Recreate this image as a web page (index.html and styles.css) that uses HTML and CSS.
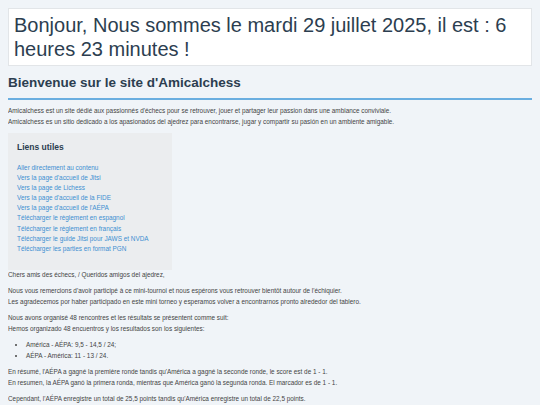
FILE: index.html
```html
<!DOCTYPE html>
<html lang="fr">
<head>
<meta charset="utf-8">
<title>Amicalchess</title>
<link rel="stylesheet" href="styles.css">
</head>
<body>
<div class="greeting">Bonjour, Nous sommes le mardi 29 juillet 2025, il est : 6 heures 23 minutes !</div>
<h2 class="title">Bienvenue sur le site d'Amicalchess</h2>
<p class="txt">Amicalchess est un site dédié aux passionnés d'échecs pour se retrouver, jouer et partager leur passion dans une ambiance conviviale.<br>Amicalchess es un sitio dedicado a los apasionados del ajedrez para encontrarse, jugar y compartir su pasión en un ambiente amigable.</p>
<nav class="links">
  <h3 class="links-title">Liens utiles</h3>
  <ul class="links-list">
    <li><a href="#">Aller directement au contenu</a></li>
    <li><a href="#">Vers la page d'accueil de Jitsi</a></li>
    <li><a href="#">Vers la page de Lichess</a></li>
    <li><a href="#">Vers la page d'accueil de la FIDE</a></li>
    <li><a href="#">Vers la page d'accueil de l'AÉPA</a></li>
    <li><a href="#">Télécharger le règlement en espagnol</a></li>
    <li><a href="#">Télécharger le règlement en français</a></li>
    <li><a href="#">Télécharger le guide Jitsi pour JAWS et NVDA</a></li>
    <li><a href="#">Télécharger les parties en format PGN</a></li>
  </ul>
</nav>
<p class="txt first">Chers amis des échecs, / Queridos amigos del ajedrez,</p>
<p class="txt">Nous vous remercions d'avoir participé à ce mini-tournoi et nous espérons vous retrouver bientôt autour de l'échiquier.<br>Les agradecemos por haber participado en este mini torneo y esperamos volver a encontrarnos pronto alrededor del tablero.</p>
<p class="txt">Nous avons organisé 48 rencontres et les résultats se présentent comme suit:<br>Hemos organizado 48 encuentros y los resultados son los siguientes:</p>
<ul class="txt results">
  <li>América - AÉPA: 9,5 - 14,5 / 24;</li>
  <li>AÉPA - América: 11 - 13 / 24.</li>
</ul>
<p class="txt">En résumé, l'AÉPA a gagné la première ronde tandis qu'América a gagné la seconde ronde, le score est de 1 - 1.<br>En resumen, la AÉPA ganó la primera ronda, mientras que América ganó la segunda ronda. El marcador es de 1 - 1.</p>
<p class="txt">Cependant, l'AÉPA enregistre un total de 25,5 points tandis qu'América enregistre un total de 22,5 points.<br>Sin embargo, la AÉPA registra un total de 25,5 puntos, mientras que América registra un total de 22,5 puntos.</p>
</body>
</html>
```

FILE: styles.css
```css
html, body {
  background: #f0f4f8;
}
body {
  margin: 8px;
  font-family: "Liberation Sans", Arial, sans-serif;
  color: #444;
}
.greeting {
  background: #fff;
  border: 1px solid #e2e5e8;
  padding: 4px 5px;
  font-size: 20px;
  line-height: 24px;
  color: #2c3e50;
}
.title {
  margin: 8px 0 0;
  padding-bottom: 6px;
  border-bottom: 2px solid #6aaee0;
  font-size: 13.5px;
  line-height: 18px;
  color: #2c3e50;
}
.txt {
  font-size: 6.4px;
  line-height: 10.5px;
  margin: 6px 0;
}
.links {
  background: #ebedef;
  width: 146px;
  padding: 8px 9px 16px;
  margin-top: 4px;
}
.links-title {
  margin: 0 0 10px;
  font-size: 8.5px;
  line-height: 12px;
  color: #2c3e50;
}
.links-list {
  list-style: none;
  margin: 0;
  padding: 0;
  font-size: 6.4px;
  line-height: 10.1px;
}
.links-list a {
  color: #3d8fd1;
  text-decoration: none;
}
.txt.first {
  margin-top: 0;
}
.results {
  padding-left: 18px;
}
```
